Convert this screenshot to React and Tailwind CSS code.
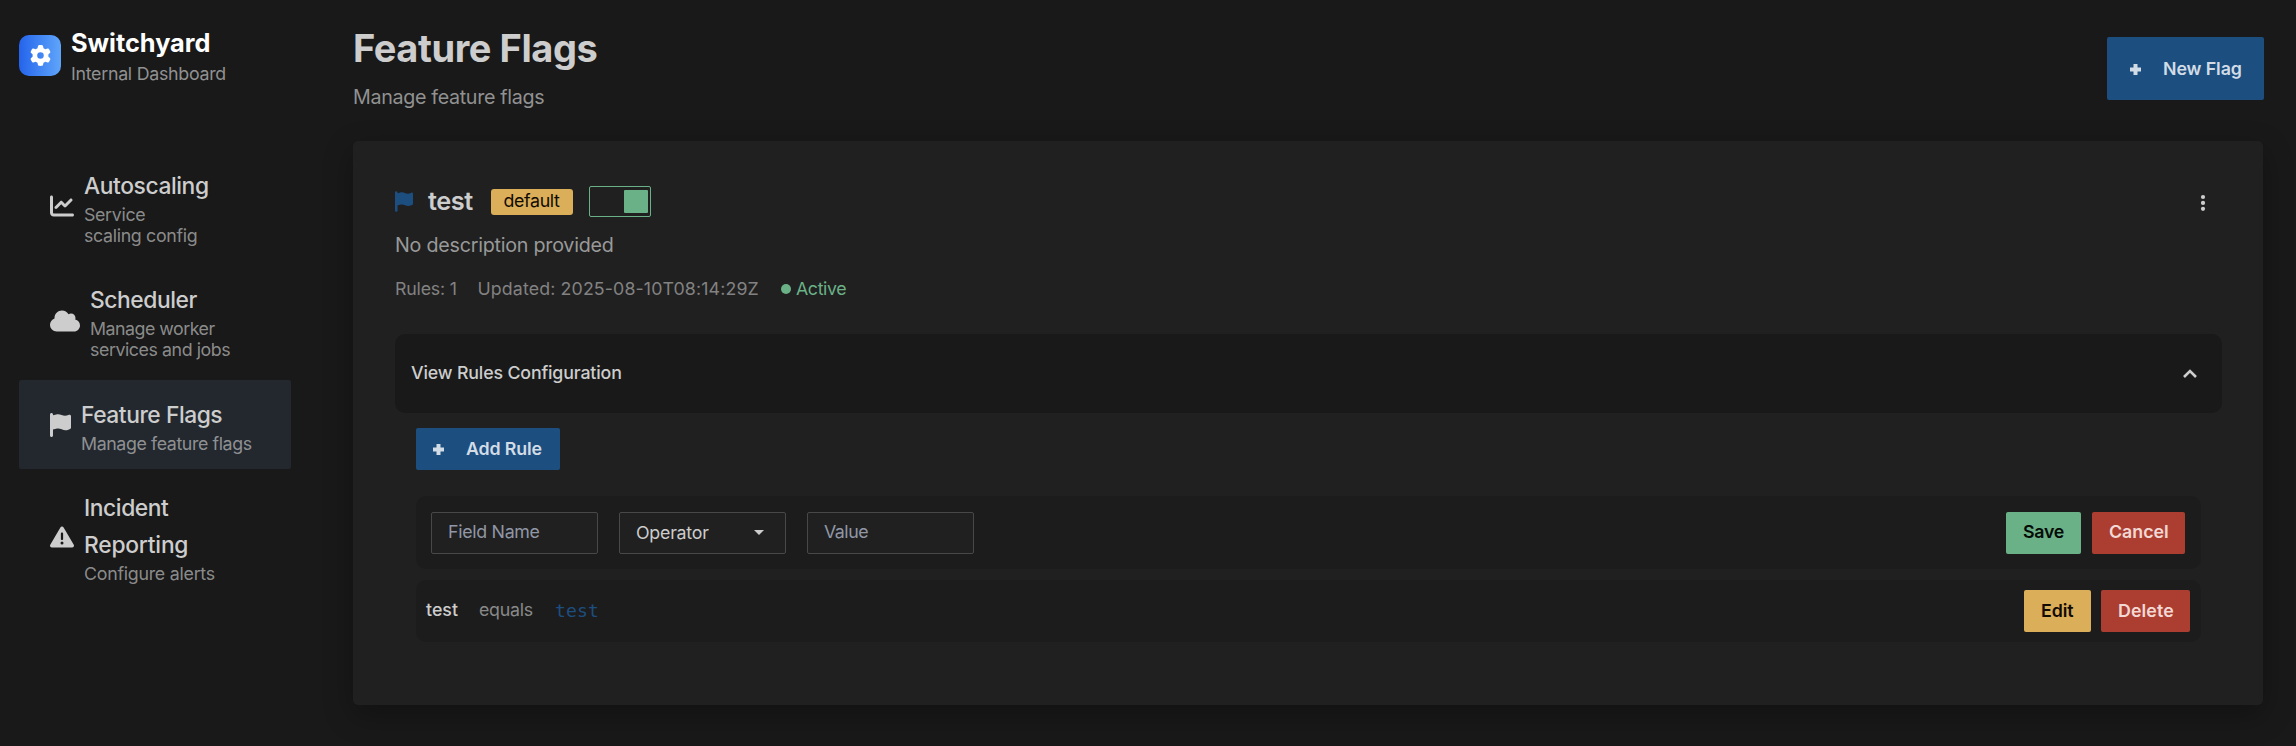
import { FaChartLine, FaCloud, FaFlag, FaGear, FaTriangleExclamation } from "react-icons/fa6";

const navItems = [
  {
    icon: <FaChartLine className="h-6 w-6" />,
    title: <span className="tracking-[-0.41px]">Autoscaling</span>,
    lines: [
      <span className="tracking-[-0.33px]">Service</span>,
      <span className="tracking-[-0.33px]">scaling config</span>,
    ],
  },
  {
    icon: <FaCloud className="h-6 w-[30px]" />,
    title: <span className="tracking-[-0.43px]">Scheduler</span>,
    lines: [
      <span className="tracking-[-0.5px]">Manage worker</span>,
      <span className="tracking-[-0.43px]">services and jobs</span>,
    ],
  },
  {
    icon: <FaFlag className="h-6 w-[21px]" />,
    title: <span className="tracking-[-0.45px]">Feature Flags</span>,
    lines: [<span className="tracking-[-0.4px]">Manage feature flags</span>],
    active: true,
  },
  {
    icon: <FaTriangleExclamation className="h-6 w-6" />,
    title: (
      <>
        <span className="block tracking-[-0.42px]">Incident</span>
        <span className="block tracking-[-0.22px]">Reporting</span>
      </>
    ),
    lines: [<span className="tracking-[-0.25px]">Configure alerts</span>],
  },
];

function PlusIcon() {
  return (
    <svg viewBox="0 0 11 11" className="h-[11px] w-[11px] shrink-0" fill="currentColor">
      <path d="M3.5 0h4v3.5H11v4H7.5V11h-4V7.5H0v-4h3.5z" />
    </svg>
  );
}

function Button({ className, children }) {
  return (
    <button className={`flex h-[42px] items-center rounded-[2px] px-[17px] text-[17.8px] font-semibold ${className}`}>
      {children}
    </button>
  );
}

function Sidebar() {
  return (
    <aside className="w-[353px] shrink-0 pl-[19px]">
      <div className="flex pt-[25px]">
        <div className="mt-2.5 flex h-[41px] w-[42px] items-center justify-center rounded-[10px] bg-linear-to-r from-[#2563eb] to-[#60a5fa] text-white">
          <FaGear className="h-[21px] w-[21px]" />
        </div>
        <div className="ml-2.5">
          <div className="h-9 text-[25.3px] leading-9 font-bold text-white">Switchyard</div>
          <div className="text-[17.8px] leading-[26px] tracking-[-0.27px] text-[#919191]">Internal Dashboard</div>
        </div>
      </div>
      <nav className="mt-[64px] flex w-[272px] flex-col gap-[4.5px]">
        {navItems.map((item, i) => (
          <a
            key={i}
            className={`flex items-center gap-2.5 rounded-[2px] py-[15.5px] pl-[31px] text-[#cdcdcd] ${item.active ? "bg-[#23282f]" : ""}`}
          >
            {item.icon}
            <div>
              <div className="text-[22.8px] leading-[37px] font-medium">{item.title}</div>
              {item.lines.map((line, j) => (
                <div key={j} className="text-[17.8px] leading-[21px] text-[#cdcdcd]/65">
                  {line}
                </div>
              ))}
            </div>
          </a>
        ))}
      </nav>
    </aside>
  );
}

function FlagHeader() {
  return (
    <div className="flex items-start justify-between">
      <div>
        <div className="flex h-[31px] items-center">
          <FaFlag className="mb-px h-[21px] w-[18px] text-[#1c4e80]" />
          <h2 className="mb-0.5 ml-[15px] w-[47px] text-[25.3px] font-semibold tracking-[-0.43px]">test</h2>
          <span className="ml-4 flex h-[26px] w-[82px] items-center justify-center rounded-[3px] bg-[#dbae59] pr-px text-[17.8px] tracking-[-0.35px] text-[#110b03]">
            default
          </span>
          <span className="ml-4 flex h-[31px] w-[62px] items-center justify-end rounded-[2px] border border-[#6bb187] pr-[2px]">
            <span className="h-[23px] w-6 rounded-[1px] bg-[#6bb187]" />
          </span>
        </div>
        <p className="mt-[13px] text-[19.7px] leading-[30px] tracking-[-0.24px] text-[#999999]">No description provided</p>
        <div className="mt-4 flex h-[26px] items-center text-[17.8px] text-[#828282]">
          <span className="w-[82.5px] tracking-[-0.21px]">Rules: 1</span>
          <span className="w-[303.5px] tracking-[0.12px]">Updated: 2025-08-10T08:14:29Z</span>
          <span className="flex items-center gap-[5px] tracking-[-0.4px] text-[#6bb187]">
            <span className="h-2.5 w-2.5 rounded-full bg-[#6bb187]" />
            Active
          </span>
        </div>
      </div>
      <button className="mt-2 mr-[15px]">
        <svg viewBox="0 0 6 18" className="h-[18px] w-1.5" fill="#cdcdcd">
          <circle cx="3" cy="3" r="2.1" />
          <circle cx="3" cy="8.9" r="2.1" />
          <circle cx="3" cy="14.8" r="2.1" />
        </svg>
      </button>
    </div>
  );
}

function RuleForm() {
  return (
    <div className="flex h-[73px] items-center justify-between rounded-[10px] bg-[#1c1c1c] pr-4 pl-[15px]">
      <div className="flex gap-[21px] text-[17.8px]">
        <div className="flex h-[42px] w-[167px] items-center rounded-[2px] border border-[#484848] bg-[#202020] pl-4 tracking-[-0.3px] text-[#9097a6]">
          Field Name
        </div>
        <div className="flex h-[42px] w-[167px] items-center justify-between rounded-[2px] border border-[#484848] bg-[#202020] pr-[21px] pl-4 tracking-[-0.24px]">
          <span className="pt-0.5">Operator</span>
          <svg viewBox="0 0 10 5" className="h-[5px] w-2.5" fill="#cdcdcd">
            <path d="M0 0h10L5 5z" />
          </svg>
        </div>
        <div className="flex h-[42px] w-[167px] items-center rounded-[2px] border border-[#484848] bg-[#202020] pl-4 tracking-[-0.5px] text-[#9097a6]">
          Value
        </div>
      </div>
      <div className="flex gap-[11px]">
        <Button className="w-[75px] bg-[#6bb187] tracking-[-0.27px] text-[#040b06]">Save</Button>
        <Button className="w-[93px] bg-[#ac3e31] text-[#f2d8d4]">Cancel</Button>
      </div>
    </div>
  );
}

function RuleRow() {
  return (
    <div className="mt-[11px] flex h-[62px] items-center justify-between rounded-[10px] bg-[#1c1c1c] pr-[11px] pl-2.5 text-[17.8px]">
      <div className="flex items-center pb-px">
        <span className="w-[53px] font-medium">test</span>
        <span className="w-[76px] tracking-[-0.28px] text-[#898989]">equals</span>
        <span className="font-['DejaVu_Sans_Mono',monospace] text-[18px] tracking-[0.2px] text-[#1c4e80]">test</span>
      </div>
      <div className="flex gap-2.5">
        <Button className="w-[67px] bg-[#dbae59] tracking-[-0.1px] text-[#110b03]">Edit</Button>
        <Button className="w-[89px] bg-[#ac3e31] tracking-[0.1px] text-[#f2d8d4]">Delete</Button>
      </div>
    </div>
  );
}

export default function App() {
  return (
    <div className="flex h-[746px] w-full overflow-hidden bg-[#191919] font-['Inter','Liberation_Sans',sans-serif] whitespace-nowrap text-[#cdcdcd]">
      <Sidebar />
      <main className="w-[1911px]">
        <header className="flex h-[141px] justify-between">
          <div className="pt-[25px]">
            <h1 className="text-[38px] leading-[46px] font-bold tracking-[-0.43px]">Feature Flags</h1>
            <p className="mt-[11px] text-[19.7px] leading-[30px] tracking-[-0.33px] text-[#919191]">Manage feature flags</p>
          </div>
          <button className="mt-[37px] flex h-[63px] w-[157px] items-center gap-[22px] rounded-[2px] bg-[#1c4e80] pt-px pl-[23px] text-[17.8px] font-semibold tracking-[-0.1px] text-[#d2dce6]">
            <PlusIcon />
            New Flag
          </button>
        </header>
        <section className="mr-px h-[564px] rounded-[5px] bg-[#202020] px-[42px] pt-[45px] shadow-[0_10px_30px_rgba(0,0,0,0.3)]">
          <FlagHeader />
          <div className="mt-8 -mr-px flex h-[79px] items-center justify-between rounded-[10px] bg-[#191919] pr-[25px] pl-4 text-[17.8px] font-medium tracking-[-0.16px]">
            View Rules Configuration
            <svg viewBox="0 0 14 9" className="h-[9px] w-3.5" fill="none" stroke="#cdcdcd" strokeWidth="2.6">
              <path d="M1 8l6-6 6 6" />
            </svg>
          </div>
          <div className="mr-5 ml-[21px] pt-[15px]">
            <Button className="mb-[26px] w-[144px] gap-[22px] bg-[#1c4e80] tracking-[-0.15px] text-[#d2dce6]">
              <PlusIcon />
              Add Rule
            </Button>
            <RuleForm />
            <RuleRow />
          </div>
        </section>
      </main>
    </div>
  );
}
